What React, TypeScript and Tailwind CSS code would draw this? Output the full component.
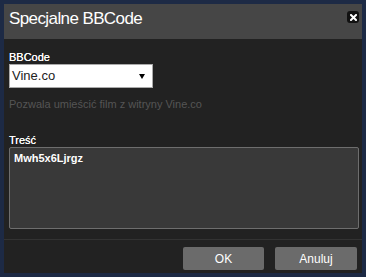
export default function App() {
  return (
    <div className="h-[277px] w-[366px] bg-[#1d2a45] p-1 font-['Liberation_Sans',Arial,sans-serif]">
      <div className="flex h-[269px] w-[358px] flex-col bg-[#222222]">
        {/* title bar */}
        <div className="flex h-[35px] shrink-0 items-start justify-between bg-[#464646] pl-[5px] pr-[3px]">
          <span className="pt-[6px] text-[17px] leading-[17px] tracking-[-0.6px] text-white">Specjalne BBCode</span>
          <button className="mt-[7px] flex h-[12px] w-[12px] items-center justify-center rounded-[3px] bg-[#111]">
            <svg width="7" height="7" viewBox="0 0 7 7">
              <path d="M1 1L6 6M6 1L1 6" stroke="white" strokeWidth="2" strokeLinecap="square" />
            </svg>
          </button>
        </div>

        {/* body */}
        <div className="flex flex-1 flex-col px-[5px] pt-[12px]">
          <label className="text-[11px] leading-[13px] text-white [text-shadow:0_0_0.4px_#fff]">BBCode</label>
          <div className="flex h-[24px] w-[144px] items-center justify-between border border-[#aaa] bg-white pl-[2px] pr-[7px]">
            <span className="text-[13px] text-[#222]">Vine.co</span>
            <svg width="6" height="5" viewBox="0 0 6 5">
              <path d="M0 0H6L3 5Z" fill="black" />
            </svg>
          </div>
          <p className="mt-[10px] text-[11px] leading-[13px] text-[#555]">
            Pozwala umieścić film z witryny Vine.co
          </p>
          <label className="mt-[23px] text-[11px] leading-[13px] text-white [text-shadow:0_0_0.4px_#fff]">Treść</label>
          <div className="h-[82px] w-[350px] rounded-[2px] border border-[#6e6e6e] bg-[#393939] px-[4px] pt-[3px] text-[11px] leading-[14px] font-bold text-white">
            Mwh5x6Ljrgz
          </div>
        </div>

        {/* footer */}
        <div className="flex h-[34px] shrink-0 items-start justify-end gap-[11px] border-t border-[#333] pt-[7px] pr-[5px]">
          <button className="h-[23px] w-[81px] rounded-[2px] bg-[#6b6b6b] text-[12px] text-white">OK</button>
          <button className="h-[23px] w-[82px] rounded-[2px] bg-[#6b6b6b] text-[12px] text-white">Anuluj</button>
        </div>
      </div>
    </div>
  );
}
